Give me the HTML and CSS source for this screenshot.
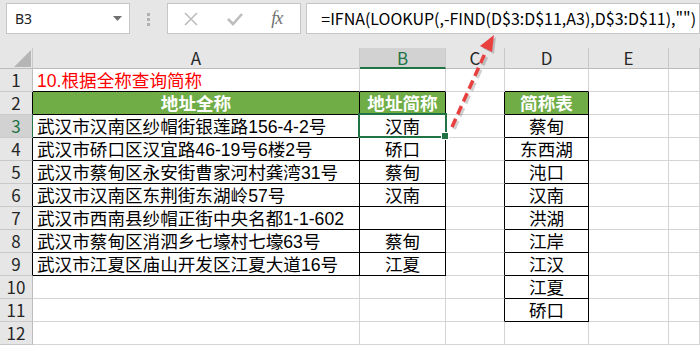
FILE: index.html
```html
<!DOCTYPE html>
<html lang="zh-CN">
<head>
    <meta charset="UTF-8">
    <title>根据全称查询简称</title>
    <link rel="stylesheet" href="styles.css">
</head>
<body>
    <!-- Name box + formula bar -->
    <div class="toolbar">
        <div class="name-box">
            <span>B3</span>
            <svg class="drop" width="10" height="6" viewBox="0 0 10 6"><polygon points="0,0 9,0 4.5,5"/></svg>
        </div>
        <div class="grip"><i></i><i></i><i></i></div>
        <div class="fx-box">
            <svg class="btn-x" width="16" height="16" viewBox="0 0 16 16"><path d="M2 2 L14 14 M14 2 L2 14"/></svg>
            <svg class="btn-ok" width="18" height="16" viewBox="0 0 18 16"><path d="M2 8 L7 13 L16 3"/></svg>
            <span class="fx">fx</span>
        </div>
        <div class="formula">=IFNA(LOOKUP(,-FIND(D$3:D$11,A3),D$3:D$11),"")</div>
    </div>

    <!-- Worksheet -->
    <div class="sheet">
        <div class="corner"><svg width="18" height="18" viewBox="0 0 18 18"><polygon points="17,0 17,17 0,17"/></svg></div>
        <div class="col-head">A</div>
        <div class="col-head active">B</div>
        <div class="col-head">C</div>
        <div class="col-head">D</div>
        <div class="col-head">E</div>
        <div class="col-head"></div>

        <div class="row-head">1</div>
        <div class="cell above title">10.根据全称查询简称</div>
        <div class="cell above"></div>
        <div class="cell"></div>
        <div class="cell above"></div>
        <div class="cell"></div>
        <div class="cell"></div>

        <div class="row-head edge">2</div>
        <div class="cell box head">地址全称</div>
        <div class="cell box head">地址简称</div>
        <div class="cell edge"></div>
        <div class="cell box head">简称表</div>
        <div class="cell"></div>
        <div class="cell"></div>

        <div class="row-head active">3</div>
        <div class="cell box">武汉市汉南区纱帽街银莲路156-4-2号</div>
        <div class="cell box mid">汉南</div>
        <div class="cell edge"></div>
        <div class="cell box mid">蔡甸</div>
        <div class="cell"></div>
        <div class="cell"></div>

        <div class="row-head edge">4</div>
        <div class="cell box">武汉市硚口区汉宜路46-19号6楼2号</div>
        <div class="cell box mid">硚口</div>
        <div class="cell edge"></div>
        <div class="cell box mid">东西湖</div>
        <div class="cell"></div>
        <div class="cell"></div>

        <div class="row-head edge">5</div>
        <div class="cell box">武汉市蔡甸区永安街曹家河村龚湾31号</div>
        <div class="cell box mid">蔡甸</div>
        <div class="cell edge"></div>
        <div class="cell box mid">沌口</div>
        <div class="cell"></div>
        <div class="cell"></div>

        <div class="row-head edge">6</div>
        <div class="cell box">武汉市汉南区东荆街东湖岭57号</div>
        <div class="cell box mid">汉南</div>
        <div class="cell edge"></div>
        <div class="cell box mid">汉南</div>
        <div class="cell"></div>
        <div class="cell"></div>

        <div class="row-head edge">7</div>
        <div class="cell box clip">武汉市西南县纱帽正街中央名都1-1-602</div>
        <div class="cell box mid"></div>
        <div class="cell edge"></div>
        <div class="cell box mid">洪湖</div>
        <div class="cell"></div>
        <div class="cell"></div>

        <div class="row-head edge">8</div>
        <div class="cell box">武汉市蔡甸区消泗乡七壕村七壕63号</div>
        <div class="cell box mid">蔡甸</div>
        <div class="cell edge"></div>
        <div class="cell box mid">江岸</div>
        <div class="cell"></div>
        <div class="cell"></div>

        <div class="row-head edge">9</div>
        <div class="cell box">武汉市江夏区庙山开发区江夏大道16号</div>
        <div class="cell box mid">江夏</div>
        <div class="cell edge"></div>
        <div class="cell box mid">江汉</div>
        <div class="cell"></div>
        <div class="cell"></div>

        <div class="row-head">10</div>
        <div class="cell"></div>
        <div class="cell"></div>
        <div class="cell edge"></div>
        <div class="cell box mid">江夏</div>
        <div class="cell"></div>
        <div class="cell"></div>

        <div class="row-head">11</div>
        <div class="cell"></div>
        <div class="cell"></div>
        <div class="cell edge"></div>
        <div class="cell box mid">硚口</div>
        <div class="cell"></div>
        <div class="cell"></div>

        <div class="row-head">12</div>
        <div class="cell"></div>
        <div class="cell"></div>
        <div class="cell"></div>
        <div class="cell"></div>
        <div class="cell"></div>
        <div class="cell"></div>

        <!-- active cell B3 -->
        <div class="selection"><span class="handle"></span></div>
    </div>

    <!-- red dashed pointer from B3 to the formula -->
    <svg class="pointer" width="700" height="345" viewBox="0 0 700 345">
        <g class="pointer-shadow">
            <line x1="454" y1="129" x2="488" y2="53"/>
            <polygon points="496,37 482,48 494,54"/>
        </g>
        <g class="pointer-line">
            <line x1="452" y1="127" x2="486" y2="51"/>
            <polygon points="494,35 480,46 492,52"/>
        </g>
    </svg>
</body>
</html>
```

FILE: styles.css
```css
body {
    margin: 0;
    width: 700px;
    height: 345px;
    overflow: hidden;
    position: relative;
    background: #e6e6e6;
    font-family: "Liberation Sans", "Noto Sans CJK SC", sans-serif;
    color: #000;
}

/* formula bar */
.toolbar {
    display: flex;
    align-items: flex-start;
    height: 48px;
    padding: 3px 0 0 6px;
    box-sizing: border-box;
}

.name-box {
    width: 126px;
    height: 31px;
    box-sizing: border-box;
    border: 1px solid #c6c6c6;
    background: #fff;
    display: flex;
    align-items: center;
    justify-content: space-between;
    padding: 0 6px 0 8px;
    font-family: "Noto Sans", sans-serif;
    font-size: 14px;
    color: #222;
}

.drop polygon {
    fill: #6f6f6f;
}

.grip {
    margin: 10px 0 0 17px;
    display: flex;
    flex-direction: column;
    gap: 2px;
}

.grip i {
    display: block;
    width: 3px;
    height: 3px;
    background: #b1b1b1;
}

.fx-box {
    margin-left: 17px;
    width: 136px;
    height: 31px;
    box-sizing: border-box;
    border: 1px solid #c6c6c6;
    background: #fff;
    display: flex;
    align-items: center;
    padding-left: 15px;
}

.btn-x path {
    stroke: #bdbdbd;
    stroke-width: 1.6;
    fill: none;
}

.btn-ok {
    margin-left: 27px;
}

.btn-ok path {
    stroke: #bdbdbd;
    stroke-width: 2.6;
    fill: none;
}

.fx {
    margin-left: 27px;
    font-family: "Liberation Serif", serif;
    font-style: italic;
    font-size: 18px;
    color: #707070;
    letter-spacing: -1px;
}

.formula {
    margin-left: 5px;
    width: 400px;
    height: 31px;
    box-sizing: border-box;
    border: 1px solid #c6c6c6;
    background: #fff;
    padding-left: 14px;
    font-family: "Noto Sans CJK SC", sans-serif;
    font-size: 16px;
    line-height: 28px;
    white-space: nowrap;
}

/* worksheet grid */
.sheet {
    position: relative;
    display: grid;
    grid-template-columns: 33px 327px 86px 59px 84px 80px 31px;
    grid-template-rows: 21px repeat(12, 23px);
    background: #fff;
}

.corner,
.col-head,
.row-head {
    background: #e6e6e6;
    box-sizing: border-box;
    color: #262626;
    font-family: "Noto Sans CJK SC", sans-serif;
    font-size: 17px;
}

.corner {
    border-right: 1px solid #c9c9c9;
    border-bottom: 1px solid #bcbcbc;
    display: flex;
    align-items: flex-end;
    justify-content: flex-end;
}

.corner polygon {
    fill: #b5b5b5;
}

.col-head {
    border-right: 1px solid #c9c9c9;
    border-bottom: 1px solid #bcbcbc;
    text-align: center;
    line-height: 20px;
}

.col-head.active {
    background: #d2d2d2;
    color: #217346;
    border-bottom: 2px solid #217346;
}

.row-head {
    border-right: 1px solid #bcbcbc;
    border-bottom: 1px solid #c9c9c9;
    text-align: center;
    line-height: 22px;
}

.row-head.edge {
    border-right-color: #000;
}

.row-head.active {
    background: #d2d2d2;
    color: #217346;
    border-right-color: #217346;
}

.cell {
    box-sizing: border-box;
    border-right: 1px solid #d4d4d4;
    border-bottom: 1px solid #d4d4d4;
    padding: 2px 4px 0;
    font-size: 17.6px;
    line-height: 20px;
    white-space: nowrap;
}

.cell.clip {
    overflow-x: clip;
}

.cell.above {
    border-bottom-color: #000;
}

.cell.edge {
    border-right-color: #000;
}

.cell.box {
    border-right-color: #000;
    border-bottom-color: #000;
}

.cell.mid,
.cell.head {
    text-align: center;
}

.cell.head {
    background: #70ad47;
    color: #fff;
    font-weight: bold;
}

.title {
    color: #ff0000;
}

.selection {
    position: absolute;
    left: 358px;
    top: 65px;
    width: 89px;
    height: 25px;
    box-sizing: border-box;
    border: 2px solid #217346;
}

.handle {
    position: absolute;
    right: -4px;
    bottom: -4px;
    width: 6px;
    height: 6px;
    background: #217346;
    border: 1px solid #fff;
}

/* arrow overlay */
.pointer {
    position: absolute;
    left: 0;
    top: 0;
    pointer-events: none;
}

.pointer-shadow line {
    stroke: rgba(0, 0, 0, 0.18);
    stroke-width: 4;
    stroke-dasharray: 9 5;
}

.pointer-shadow polygon {
    fill: rgba(0, 0, 0, 0.18);
}

.pointer-line line {
    stroke: #e8403f;
    stroke-width: 3.5;
    stroke-dasharray: 9 5;
}

.pointer-line polygon {
    fill: #e8403f;
}
```
